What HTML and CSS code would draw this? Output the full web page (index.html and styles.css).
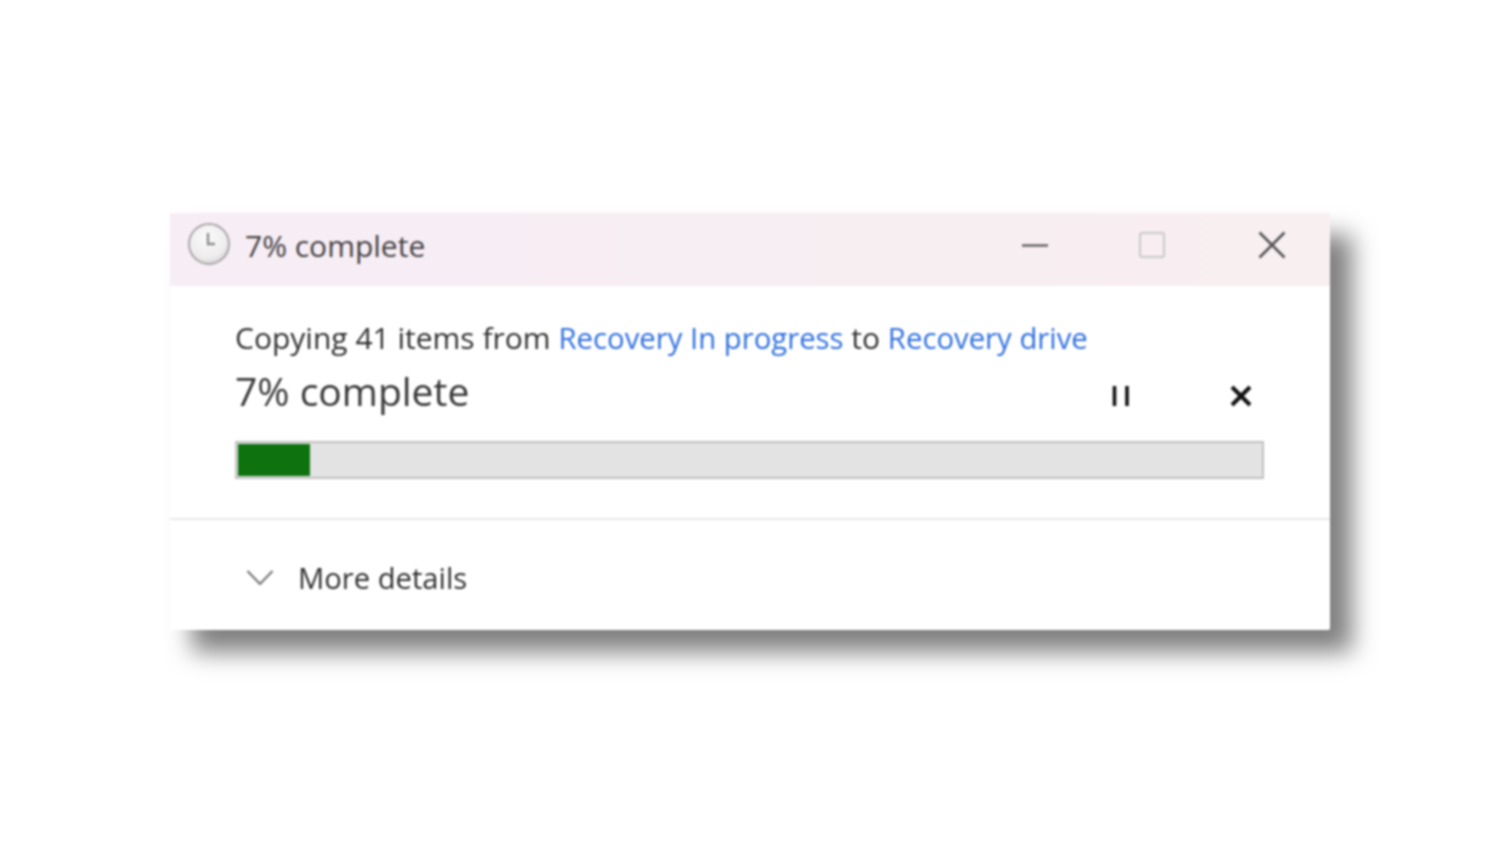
FILE: index.html
```html
<!DOCTYPE html>
<html lang="en">
<head>
  <meta charset="UTF-8">
  <meta name="viewport" content="width=device-width, initial-scale=1.0">
  <title>7% complete</title>
  <link rel="stylesheet" href="styles.css">
</head>
<body>
  <div class="window">
    <!-- Title bar -->
    <div class="titlebar">
      <svg class="clock" width="44" height="44" viewBox="0 0 44 44">
        <defs>
          <radialGradient id="face" cx="45%" cy="35%" r="70%">
            <stop offset="0" stop-color="#fbfbfb"/>
            <stop offset="0.7" stop-color="#eeeced"/>
            <stop offset="1" stop-color="#cfcdce"/>
          </radialGradient>
        </defs>
        <circle cx="22" cy="22" r="20" fill="url(#face)" stroke="#a9a7a8" stroke-width="2"/>
        <path d="M21 11V22H28" fill="none" stroke="#8d8b8c" stroke-width="2.4"/>
      </svg>
      <span class="title-text">7% complete</span>
      <div class="window-controls">
        <svg class="control" width="30" height="30" viewBox="0 0 30 30">
          <path d="M2 15.500H28" stroke="#5f5d5e" stroke-width="2.400"/>
        </svg>
        <svg class="control" width="30" height="30" viewBox="0 0 30 30">
          <rect x="3" y="3" width="24" height="24" rx="2" fill="none" stroke="#cfcdce" stroke-width="2.400"/>
        </svg>
        <svg class="control" width="30" height="30" viewBox="0 0 30 30">
          <path d="M2.500 2.500L27.500 27.500M27.500 2.500L2.500 27.500" stroke="#555" stroke-width="2.600"/>
        </svg>
      </div>
    </div>

    <!-- Copy progress -->
    <div class="content">
      <div class="copy-line">Copying 41 items from <a class="link">Recovery In progress</a> to <a class="link">Recovery drive</a></div>
      <div class="status-row">
        <span class="status-text">7% complete</span>
        <div class="status-actions">
          <svg width="24" height="24" viewBox="0 0 24 24">
            <path d="M6.500 2V22M19 2V22" stroke="#111" stroke-width="3.600"/>
          </svg>
          <svg width="24" height="24" viewBox="0 0 24 24">
            <path d="M3 3L21 21M21 3L3 21" stroke="#111" stroke-width="4"/>
          </svg>
        </div>
      </div>
      <div class="progress">
        <div class="progress-fill" style="width: 7%"></div>
      </div>
    </div>

    <!-- Footer -->
    <div class="footer">
      <svg class="chevron" width="28" height="18" viewBox="0 0 28 18">
        <path d="M1.500 2L14 15L26.500 2" fill="none" stroke="#777" stroke-width="2.200"/>
      </svg>
      <span class="footer-text">More details</span>
    </div>
  </div>
</body>
</html>
```

FILE: styles.css
```css
html, body {
  height: 100%;
}

body {
  background-color: #ffffff;
  font-family: 'Open Sans', 'Noto Sans', sans-serif;
  margin: 0;
  padding: 213px 170px 0;
  box-sizing: border-box;
}

.window {
  height: 417px;
  background-color: #ffffff;
  box-shadow: 22px 22px 24px rgba(0, 0, 0, 0.5);
  border-radius: 2px;
  display: flex;
  flex-direction: column;
  filter: blur(0.8px);
}

.titlebar {
  height: 73px;
  background: linear-gradient(to right, #f7edf5, #f8eff1);
  display: flex;
  align-items: center;
  padding-left: 17px;
  padding-right: 43px;
}

.clock {
  margin-right: 14px;
  margin-top: -12px;
}

.title-text {
  font-size: 30px;
  color: #444244;
  margin-top: -8px;
}

.window-controls {
  margin-left: auto;
  display: flex;
  gap: 90px;
  margin-top: -10px;
}

.control:first-child {
  margin-left: 3px;
  margin-right: -3px;
}

.content {
  padding: 32px 66px 0 65px;
  height: 234px;
  box-sizing: border-box;
  border-bottom: 2px solid #e8e8e8;
}

.copy-line {
  font-size: 30px;
  line-height: 40px;
  color: #303030;
  white-space: nowrap;
}

.link {
  color: #2f6fe0;
  font-size: 29.300px;
}

.status-row {
  display: flex;
  align-items: center;
  height: 54px;
  margin-top: 5px;
}

.status-text {
  font-size: 39px;
  color: #383838;
}

.status-actions {
  margin-left: auto;
  display: flex;
  gap: 98px;
  margin-right: 11px;
  margin-top: 12px;
}

.status-actions svg:first-child {
  margin-right: -1px;
}

.progress {
  height: 38px;
  margin-top: 24px;
  box-sizing: border-box;
  padding: 1px;
  background-color: #e3e3e3;
  border: 2px solid #c0c0c0;
}

.progress-fill {
  height: 100%;
  background-color: #0e730e;
}

.footer {
  flex: 1;
  display: flex;
  align-items: center;
  gap: 24px;
  padding-left: 76px;
}

.chevron {
  margin-top: 6px;
}

.footer-text {
  font-size: 29.200px;
  color: #303030;
  margin-top: 5px;
}
```
